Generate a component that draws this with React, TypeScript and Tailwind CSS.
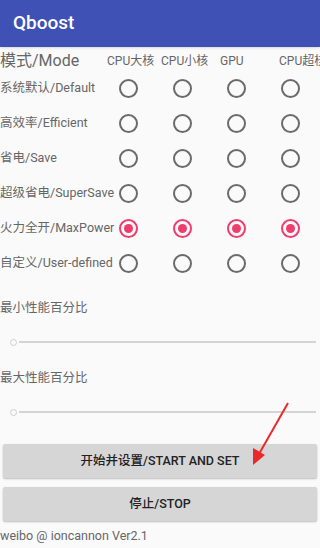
const font = { fontFamily: '"Roboto", "Noto Sans CJK SC", sans-serif' };

const modes = [
  { label: "系统默认/Default", on: false },
  { label: "高效率/Efficient", on: false },
  { label: "省电/Save", on: false },
  { label: "超级省电/SuperSave", on: false },
  { label: "火力全开/MaxPower", on: true },
  { label: "自定义/User-defined", on: false },
];

const columns = [
  { name: "CPU大核", pad: "pl-0" },
  { name: "CPU小核", pad: "pl-0" },
  { name: "GPU", pad: "pl-[5px]" },
  { name: "CPU超核", pad: "pl-[10px]" },
];

function Radio({ on }: { on: boolean }) {
  return (
    <div
      className={
        "ml-[12px] flex h-[19px] w-[19px] items-center justify-center rounded-full border-2 " +
        (on ? "border-[#ef3d6d]" : "border-[#6b6b6b]")
      }
    >
      {on && <div className="h-[9px] w-[9px] rounded-full bg-[#ef3d6d]" />}
    </div>
  );
}

function Slider() {
  return (
    <div className="flex h-[20px] items-center pl-[10px] pr-[4px]">
      <div className="h-[7px] w-[7px] rounded-full border-[1.5px] border-[#cfcfcf]" />
      <div className="ml-[2px] h-[2px] flex-1 bg-[#d4d4d4]" />
    </div>
  );
}

export default function App() {
  return (
    <div className="relative h-[548px] w-[320px] overflow-hidden bg-[#fafafa]" style={font}>
      <div className="flex h-[47px] items-center bg-[#3f51b5] pl-[13px] shadow-sm">
        <span className="text-[19px] font-medium text-white">Qboost</span>
      </div>

      <div className="grid grid-cols-[107px_54px_54px_54px_54px] whitespace-nowrap">
        <div className="flex h-[24px] items-end text-[16px] leading-[20px] text-[#666]">模式/Mode</div>
        {columns.map((c) => (
          <div key={c.name} className={"flex h-[24px] items-end text-[12px] leading-[19px] text-[#666] " + c.pad}>
            {c.name}
          </div>
        ))}
        {modes.map((m) => (
          <>
            <div key={m.label} className="flex h-[35px] items-center text-[12.5px] text-[#666]">
              {m.label}
            </div>
            {columns.map((c) => (
              <div key={m.label + c.name} className="flex h-[35px] items-center">
                <Radio on={m.on} />
              </div>
            ))}
          </>
        ))}
      </div>

      <div className="mt-[17px] text-[12.5px] leading-[20px] text-[#666]">最小性能百分比</div>
      <div className="mt-[14px]">
        <Slider />
      </div>
      <div className="mt-[16px] text-[12.5px] leading-[20px] text-[#666]">最大性能百分比</div>
      <div className="mt-[14px]">
        <Slider />
      </div>

      <div className="mt-[22px] px-[3px]">
        <button className="flex h-[34px] w-full items-center justify-center rounded-[2px] bg-[#d6d6d6] text-[12.5px] font-medium text-[#222] shadow-[0_1px_2px_rgba(0,0,0,0.25)]">
          开始并设置/START AND SET
        </button>
        <button className="mt-[9px] flex h-[34px] w-full items-center justify-center rounded-[2px] bg-[#d6d6d6] text-[12.5px] font-medium text-[#222] shadow-[0_1px_2px_rgba(0,0,0,0.25)]">
          停止/STOP
        </button>
      </div>
      <div className="mt-[5px] text-[12.5px] leading-[20px] text-[#666]">weibo @ ioncannon Ver2.1</div>

      <svg className="pointer-events-none absolute left-0 top-0" width="320" height="548">
        <line x1="288" y1="403" x2="259" y2="454" stroke="#ea2a2a" strokeWidth="2" />
        <polygon points="253,465 253,448 265,455" fill="#ea2a2a" />
      </svg>
    </div>
  );
}
